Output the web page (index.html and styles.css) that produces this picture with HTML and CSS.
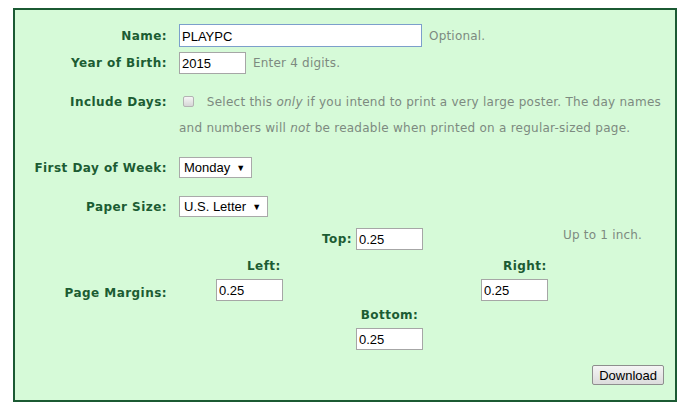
FILE: index.html
```html
<!DOCTYPE html>
<html lang="en">
<head>
  <meta charset="utf-8">
  <title>Calendar Poster</title>
  <link rel="stylesheet" href="styles.css">
</head>
<body>

  <form class="poster-form">
    <!-- Name -->
    <label class="field-label row-name" for="name">Name:</label>
    <div class="field row-name">
      <input type="text" id="name" class="text-input name-input focused" value="PLAYPC">
      <span class="hint">Optional.</span>
    </div>

    <!-- Year -->
    <label class="field-label row-year" for="year">Year of Birth:</label>
    <div class="field row-year">
      <input type="text" id="year" class="text-input short-input" value="2015">
      <span class="hint">Enter 4 digits.</span>
    </div>

    <!-- Include days -->
    <label class="field-label row-days" for="days">Include Days:</label>
    <div class="field-text row-days">
      <input type="checkbox" id="days" class="check">
      <span class="hint">Select this <em>only</em> if you intend to print a very large poster. The day names<br>and numbers will <em>not</em> be readable when printed on a regular-sized page.</span>
    </div>

    <!-- First day of week -->
    <label class="field-label row-week" for="week">First Day of Week:</label>
    <div class="field row-week">
      <span class="select" id="week">Monday <i class="arrow">&#9660;</i></span>
    </div>

    <!-- Paper size -->
    <label class="field-label row-paper" for="paper">Paper Size:</label>
    <div class="field row-paper">
      <span class="select" id="paper">U.S. Letter <i class="arrow">&#9660;</i></span>
    </div>

    <!-- Margins -->
    <div class="field-label row-margins margins-label">Page Margins:</div>
    <div class="margins row-margins">
      <span class="m-label top-label">Top:</span>
      <input type="text" class="text-input short-input top-input" value="0.25">
      <span class="hint up-to">Up to 1 inch.</span>

      <span class="m-label left-label">Left:</span>
      <span class="m-label right-label">Right:</span>
      <input type="text" class="text-input short-input left-input" value="0.25">
      <input type="text" class="text-input short-input right-input" value="0.25">

      <span class="m-label bottom-label">Bottom:</span>
      <input type="text" class="text-input short-input bottom-input" value="0.25">
    </div>

    <div class="actions">
      <button type="button" class="download">Download</button>
    </div>
  </form>

</body>
</html>
```

FILE: styles.css
```css
/* Calendar poster form */
body {
  margin: 0;
  padding: 8px 0 0 13px;
  background: #fff;
  font-family: "DejaVu Sans", Verdana, sans-serif;
}

.poster-form {
  width: 664px;
  height: 394px;
  box-sizing: border-box;
  border: 2px solid #1b5a33;
  background-color: #d6fad8;
  padding: 14px 14px 0 0;
  display: grid;
  grid-template-columns: 152px 1fr;
  column-gap: 12px;
  align-content: start;
}

.field-label {
  font-size: 12px;
  font-weight: bold;
  color: #1c5c33;
  text-align: right;
  align-self: center;
  letter-spacing: 0.45px;
}

.field {
  display: flex;
  align-items: center;
  gap: 7px;
}

.hint {
  font-size: 12px;
  color: #7d8a80;
  letter-spacing: 0.2px;
}

.hint em {
  font-style: italic;
}

.text-input {
  box-sizing: border-box;
  height: 22px;
  margin: 0;
  padding: 1px 2px 0;
  border: 1px solid #a6a6a6;
  background: #fff;
  font-family: "Liberation Sans", Arial, sans-serif;
  font-size: 13px;
  color: #000;
  outline: none;
}

.name-input {
  width: 243px;
  height: 23px;
}

.focused {
  border-color: #7c9fcb;
}

.short-input {
  width: 67px;
}

/* rows */
.row-year {
  margin-top: 5px;
}

.row-days {
  margin-top: 15px;
  align-self: start;
}

.field-label.row-days {
  line-height: 26px;
}

.field-text {
  font-size: 12px;
  line-height: 26px;
  white-space: nowrap;
}

.field-text .hint {
  letter-spacing: 0.25px;
}

.check {
  appearance: none;
  -webkit-appearance: none;
  width: 11px;
  height: 11px;
  margin: 0 9px 0 4px;
  vertical-align: -1px;
  border: 1px solid #b3b3b3;
  border-radius: 2px;
  background: linear-gradient(#f6f6f6, #d6d6d6);
}

.row-week {
  margin-top: 16px;
}

.row-paper {
  margin-top: 18px;
}

.select {
  box-sizing: border-box;
  height: 21px;
  display: inline-flex;
  align-items: center;
  padding: 0 6px 0 4px;
  border: 1px solid #a9a9a9;
  background: #fff;
  font-family: "Liberation Sans", Arial, sans-serif;
  font-size: 13px;
  color: #000;
}

.arrow {
  font-style: normal;
  font-size: 9px;
  margin-left: 6px;
}

/* margins table */
.row-margins {
  margin-top: 11px;
}

.margins-label {
  align-self: start;
  padding-top: 58px;
}

.margins {
  display: grid;
  grid-template-columns: 141px 36px 67px 58px 67px 1fr;
  grid-template-rows: 22px 29px 22px 27px 22px;
  align-items: center;
}

.m-label {
  font-size: 12px;
  font-weight: bold;
  color: #1c5c33;
  letter-spacing: 0.45px;
}

.top-label {
  grid-column: 2;
  grid-row: 1;
  justify-self: end;
  padding-right: 4px;
}

.top-input {
  grid-column: 3;
  grid-row: 1;
}

.up-to {
  grid-column: 6;
  grid-row: 1;
  align-self: start;
  margin-left: 15px;
}

.left-label {
  grid-column: 1;
  grid-row: 2;
  margin-left: 68px;
  padding-top: 3px;
}

.right-label {
  grid-column: 5 / span 2;
  grid-row: 2;
  margin-left: 22px;
  padding-top: 3px;
}

.left-input {
  grid-column: 1;
  grid-row: 3;
  margin-left: 37px;
}

.right-input {
  grid-column: 5;
  grid-row: 3;
}

.bottom-label {
  grid-column: 3;
  grid-row: 4;
  justify-self: center;
}

.bottom-input {
  grid-column: 3;
  grid-row: 5;
}

.actions {
  grid-column: 2;
  display: flex;
  justify-content: flex-end;
  margin-top: 15px;
  margin-right: -3px;
}

.download {
  height: 20px;
  padding: 0 6px;
  border: 1px solid #8e8e8e;
  border-radius: 2px;
  background: linear-gradient(#f5f5f5, #dcdcdc);
  font-family: "Liberation Sans", Arial, sans-serif;
  font-size: 13px;
  color: #000;
}
```
